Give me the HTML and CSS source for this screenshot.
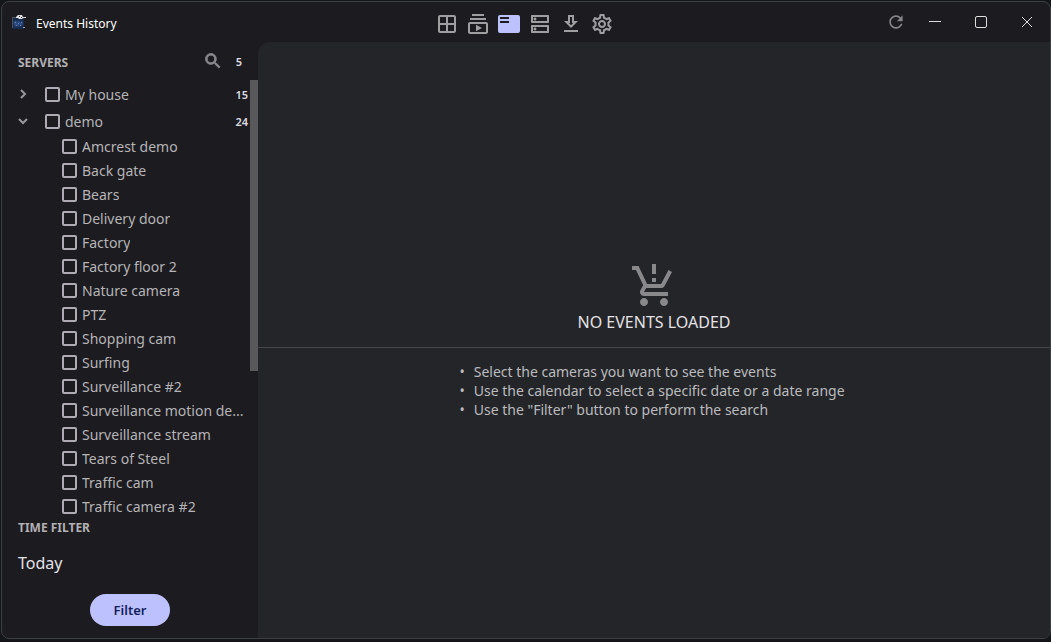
FILE: index.html
```html
<!DOCTYPE html>
<html lang="en">
<head>
<meta charset="utf-8">
<title>Events History</title>
<link rel="stylesheet" href="styles.css">
</head>
<body>
<div class="window">
  <header class="titlebar">
    <div class="brand">
      <svg class="logo" viewBox="0 0 16 16" aria-hidden="true">
        <path d="M1 4h12v11H1z" fill="#182c50"/>
        <path d="M1 3h4v1H2v10H1z" fill="#4b5058"/>
        <path d="M2 8l3-2 1 2 2-2 1 2 2-1 1 2-1 3-2-1-1 2-2-1-2 1-1-2z" fill="#29497f"/>
        <path d="M4 8h1v1H4zM7 9h1v1H7zM10 8h1v1h-1zM5 11h1v1H5zM9 11h1v1H9z" fill="#7185a8"/>
        <path d="M5 3l2-2h4l1 2h3v1h-3l-1 1H8L7 4 5 4z" fill="#dedee0"/>
        <path d="M8 2h1v1H8zM10 3h1v1h-1z" fill="#33343a"/>
        <path d="M12 13h2v1h-2z" fill="#9a9ca2"/>
      </svg>
      <h1 class="title">Events History</h1>
    </div>
    <nav class="tabs" aria-label="Views">
      <button class="tab" aria-label="Screens"><svg viewBox="0 0 24 24"><path d="M19 3H5c-1.100 0-2 .9-2 2v14c0 1.100.9 2 2 2h14c1.100 0 2-.9 2-2V5c0-1.100-.9-2-2-2zm0 8h-6V5h6v6zm-8-6v6H5V5h6zm-6 8h6v6H5v-6zm8 6v-6h6v6h-6z"/></svg></button>
      <button class="tab" aria-label="Timeline"><svg viewBox="0 0 24 24"><path d="M4 6h16v2H4zM6 2h12v2H6zM20 10H4c-1.100 0-2 .9-2 2v8c0 1.100.9 2 2 2h16c1.100 0 2-.9 2-2v-8c0-1.100-.9-2-2-2zm0 10H4v-8h16v8zM10 12.730v6.540L16 16z"/></svg></button>
      <button class="tab tab-active" aria-label="Events"><svg viewBox="0 0 24 24"><path d="M21 3H3c-1.100 0-2 .9-2 2v14c0 1.100.9 2 2 2h18c1.100 0 2-.9 2-2V5c0-1.100-.9-2-2-2zm-9 8H3V9h9v2zm0-4H3V5h9v2z"/></svg></button>
      <button class="tab" aria-label="Servers"><svg viewBox="0 0 24 24"><path d="M19 15v4H5v-4h14m1-2H4c-.55 0-1 .45-1 1v6c0 .55.45 1 1 1h16c.55 0 1-.45 1-1v-6c0-.55-.45-1-1-1zM7 18.500c-.82 0-1.500-.67-1.500-1.500s.68-1.500 1.500-1.500 1.500.67 1.500 1.500-.67 1.500-1.500 1.500zM19 5v4H5V5h14m1-2H4c-.55 0-1 .45-1 1v6c0 .55.45 1 1 1h16c.55 0 1-.45 1-1V4c0-.55-.45-1-1-1zM7 8.500c-.82 0-1.500-.67-1.500-1.500S6.180 5.500 7 5.500s1.500.68 1.500 1.500S7.830 8.500 7 8.500z"/></svg></button>
      <button class="tab" aria-label="Downloads"><svg viewBox="0 0 24 24"><path d="M19 9h-4V3H9v6H5l7 7 7-7zm-8 2V5h2v6h1.170L12 13.170 9.830 11H11zm-6 7h14v2H5z"/></svg></button>
      <button class="tab" aria-label="Settings"><svg viewBox="0 0 24 24"><path d="M19.430 12.980c.04-.32.07-.64.07-.98s-.03-.66-.07-.98l2.110-1.650c.19-.15.24-.42.12-.64l-2-3.460c-.09-.16-.26-.25-.44-.25-.06 0-.12.01-.17.03l-2.490 1c-.52-.4-1.080-.73-1.690-.98l-.38-2.650C14.460 2.180 14.250 2 14 2h-4c-.25 0-.46.18-.49.42l-.38 2.650c-.61.25-1.170.59-1.690.98l-2.490-1c-.06-.02-.12-.03-.18-.03-.17 0-.34.09-.43.25l-2 3.460c-.13.22-.07.49.12.64l2.110 1.650c-.04.32-.07.65-.07.98s.03.66.07.98l-2.110 1.650c-.19.15-.24.42-.12.64l2 3.460c.09.16.26.25.44.25.06 0 .12-.01.17-.03l2.490-1c.52.4 1.080.73 1.690.98l.38 2.650c.03.24.24.42.49.42h4c.25 0 .46-.18.49-.42l.38-2.650c.61-.25 1.170-.59 1.690-.98l2.490 1c.06.02.12.03.18.03.17 0 .34-.09.43-.25l2-3.460c.12-.22.07-.49-.12-.64l-2.110-1.650zm-1.980-1.710c.04.31.05.52.05.73s-.02.43-.05.73l-.14 1.130.89.7 1.080.84-.7 1.210-1.270-.51-1.040-.42-.9.68c-.43.32-.84.56-1.250.73l-1.060.43-.16 1.130-.2 1.350h-1.400l-.19-1.350-.16-1.130-1.060-.43c-.43-.18-.83-.41-1.230-.71l-.91-.7-1.060.43-1.270.51-.7-1.210 1.080-.84.89-.7-.14-1.130c-.03-.31-.05-.54-.05-.74s.02-.43.05-.73l.14-1.130-.89-.7-1.080-.84.7-1.210 1.270.51 1.040.42.9-.68c.43-.32.84-.56 1.250-.73l1.060-.43.16-1.130.2-1.350h1.390l.19 1.350.16 1.130 1.060.43c.43.18.83.41 1.230.71l.91.7 1.060-.43 1.270-.51.7 1.210-1.070.85-.89.7.14 1.130zM12 8c-2.210 0-4 1.790-4 4s1.790 4 4 4 4-1.790 4-4-1.790-4-4-4zm0 6c-1.100 0-2-.9-2-2s.9-2 2-2 2 .9 2 2-.9 2-2 2z"/></svg></button>
    </nav>
    <div class="controls">
      <button class="refresh" aria-label="Refresh"><svg viewBox="0 0 24 24"><path d="M17.650 6.350C16.200 4.900 14.210 4 12 4c-4.420 0-7.990 3.580-7.990 8s3.570 8 7.990 8c3.730 0 6.840-2.550 7.730-6h-2.080c-.82 2.330-3.040 4-5.650 4-3.310 0-6-2.690-6-6s2.690-6 6-6c1.660 0 3.140.69 4.220 1.780L13 11h7V4l-2.350 2.350z"/></svg></button>
      <button class="control" aria-label="Minimize"><svg viewBox="0 0 12 12"><path d="M0 5.500h12"/></svg></button>
      <button class="control" aria-label="Maximize"><svg viewBox="0 0 12 12"><rect x=".5" y=".5" width="11" height="11" rx="1.500"/></svg></button>
      <button class="control" aria-label="Close"><svg viewBox="0 0 12 12"><path d="M1 1l10 10M11 1L1 11"/></svg></button>
    </div>
  </header>
  <div class="body">
    <aside class="sidebar">
      <div class="servers-head">
        <h2 class="label">SERVERS</h2>
        <button class="search" aria-label="Search"><svg viewBox="0 0 24 24"><path d="M15.500 14h-.79l-.28-.27C15.410 12.590 16 11.110 16 9.500 16 5.910 13.090 3 9.500 3S3 5.910 3 9.500 5.910 16 9.500 16c1.610 0 3.090-.59 4.230-1.570l.27.28v.79l5 4.990L20.490 19l-4.990-5zm-6 0C7.010 14 5 11.990 5 9.500S7.010 5 9.500 5 14 7.010 14 9.500 11.990 14 9.500 14z"/></svg></button>
        <span class="count">5</span>
      </div>
      <div class="list-area">
        <div class="tree">
          <div class="server server-first">
            <button class="expander" aria-label="Expand My house"><svg viewBox="0 0 10 10"><path d="M3 1l4 4-4 4"/></svg></button>
            <label class="option"><input type="checkbox" class="check"><span class="name">My house</span></label>
            <span class="count">15</span>
          </div>
          <div class="server">
            <button class="expander" aria-label="Collapse demo"><svg viewBox="0 0 10 10"><path d="M1 3l4 4 4-4"/></svg></button>
            <label class="option"><input type="checkbox" class="check"><span class="name">demo</span></label>
            <span class="count">24</span>
          </div>
          <div class="cameras">
            <label class="option camera"><input type="checkbox" class="check"><span class="name">Amcrest demo</span></label>
            <label class="option camera"><input type="checkbox" class="check"><span class="name">Back gate</span></label>
            <label class="option camera"><input type="checkbox" class="check"><span class="name">Bears</span></label>
            <label class="option camera"><input type="checkbox" class="check"><span class="name">Delivery door</span></label>
            <label class="option camera"><input type="checkbox" class="check"><span class="name">Factory</span></label>
            <label class="option camera"><input type="checkbox" class="check"><span class="name">Factory floor 2</span></label>
            <label class="option camera"><input type="checkbox" class="check"><span class="name">Nature camera</span></label>
            <label class="option camera"><input type="checkbox" class="check"><span class="name">PTZ</span></label>
            <label class="option camera"><input type="checkbox" class="check"><span class="name">Shopping cam</span></label>
            <label class="option camera"><input type="checkbox" class="check"><span class="name">Surfing</span></label>
            <label class="option camera"><input type="checkbox" class="check"><span class="name">Surveillance #2</span></label>
            <label class="option camera"><input type="checkbox" class="check"><span class="name">Surveillance motion de...</span></label>
            <label class="option camera"><input type="checkbox" class="check"><span class="name">Surveillance stream</span></label>
            <label class="option camera"><input type="checkbox" class="check"><span class="name">Tears of Steel</span></label>
            <label class="option camera"><input type="checkbox" class="check"><span class="name">Traffic cam</span></label>
            <label class="option camera"><input type="checkbox" class="check"><span class="name">Traffic camera #2</span></label>
          </div>
        </div>
        <div class="scrollbar"><div class="thumb"></div></div>
      </div>
      <div class="time">
        <h2 class="label">TIME FILTER</h2>
        <button class="date">Today</button>
        <button class="filter">Filter</button>
      </div>
    </aside>
    <main class="content">
      <section class="empty">
        <svg class="cart" viewBox="0 0 24 24" aria-hidden="true"><path d="M13 10h-2V8h2v2zm0-4h-2V1h2v5zM7 18c-1.100 0-1.990.9-1.990 2S5.900 22 7 22s2-.9 2-2-.9-2-2-2zm10 0c-1.100 0-1.990.9-1.990 2s.89 2 1.990 2 2-.9 2-2-.9-2-2-2zm-8.900-5h7.450c.75 0 1.410-.41 1.750-1.030L21 4.960 19.250 4l-3.700 7H8.530L4.270 2H1v2h2l3.600 7.590-1.350 2.440C4.520 15.370 5.480 17 7 17h12v-2H7l1.100-2z"/></svg>
        <p class="message">NO EVENTS LOADED</p>
      </section>
      <section class="help">
        <ul class="tips">
          <li>Select the cameras you want to see the events</li>
          <li>Use the calendar to select a specific date or a date range</li>
          <li>Use the "Filter" button to perform the search</li>
        </ul>
      </section>
    </main>
  </div>
</div>
</body>
</html>
```
FILE: styles.css
```css
* {
  box-sizing: border-box;
}

body {
  margin: 0;
  height: 100vh;
  padding: 1px 0 3px 1px;
  background: #131518;
  color: #bbbbbe;
  font-family: "Noto Sans", "Open Sans", sans-serif;
  font-size: 14px;
}

h1, h2, p, ul {
  margin: 0;
}

button {
  padding: 0;
  border: 0;
  background: none;
  color: inherit;
  font: inherit;
}

svg {
  display: block;
}

.window {
  display: flex;
  flex-direction: column;
  height: 100%;
  overflow: hidden;
  border: 1px solid #3d3e42;
  border-radius: 8px;
  background: #1c1b1f;
}

.titlebar {
  display: grid;
  grid-template-columns: 1fr auto 1fr;
  align-items: center;
  flex: none;
  height: 40px;
}

.brand {
  display: flex;
  align-items: center;
  gap: 9px;
  padding-left: 9px;
}

.logo {
  width: 16px;
  height: 16px;
}

.title {
  color: #fff;
  font-size: 12px;
  font-weight: 400;
  line-height: 20px;
  padding-top: 3px;
}

.tabs {
  display: flex;
  gap: 7px;
  padding: 3px 4px 0 0;
}

.tab {
  color: #9f9ea1;
}

.tab svg {
  width: 24px;
  height: 24px;
  fill: currentColor;
}

.tab-active {
  color: #bdc2ff;
}

.controls {
  display: flex;
  align-items: center;
  justify-content: flex-end;
}

.refresh {
  margin-right: 6px;
  color: #858488;
}

.refresh svg {
  width: 20px;
  height: 20px;
  fill: currentColor;
}

.control {
  display: grid;
  place-items: center;
  width: 46px;
  height: 32px;
}

.control svg {
  width: 12px;
  height: 12px;
  fill: none;
  stroke: #dededf;
}

.body {
  display: flex;
  flex: 1;
  min-height: 0;
}

.sidebar {
  display: flex;
  flex-direction: column;
  flex: none;
  width: 256px;
}

.servers-head {
  display: flex;
  align-items: center;
  height: 38px;
  padding: 0 16px;
}

.label {
  color: #b2b1b4;
  font-size: 12px;
  font-weight: 700;
  line-height: 20px;
}

.servers-head .label {
  padding-top: 3px;
}

.search {
  margin-left: auto;
  margin-right: 13px;
  color: #89888c;
}

.search svg {
  width: 20px;
  height: 20px;
  fill: currentColor;
  stroke: currentColor;
}

.count {
  color: #dddce0;
  font-size: 11px;
  font-weight: 600;
}

.list-area {
  display: flex;
  flex: 1;
  min-height: 0;
}

.tree {
  flex: 1;
  min-width: 0;
  overflow: hidden;
}

.server {
  display: flex;
  align-items: center;
  height: 26px;
  padding: 0 2px 0 16px;
}

.server-first {
  height: 28px;
}

.expander {
  margin-right: 17px;
}

.expander svg {
  width: 10px;
  height: 10px;
  fill: none;
  stroke: #99989c;
  stroke-width: 2;
}

.option {
  display: flex;
  align-items: center;
  gap: 5px;
  flex: 1;
  min-width: 0;
}

.camera {
  height: 24px;
}

.cameras {
  padding-left: 60px;
}

.check {
  appearance: none;
  flex: none;
  width: 15px;
  height: 15px;
  margin: 0;
  border: 2px solid #aeabb4;
  border-radius: 2px;
}

.name {
  overflow: hidden;
  padding-top: 2px;
  color: #b5b4b7;
  line-height: 20px;
  white-space: nowrap;
}

.scrollbar {
  flex: none;
  width: 8px;
}

.thumb {
  height: 66.500%;
  background: #59585b;
}

.time {
  display: flex;
  flex-direction: column;
  align-items: flex-start;
  flex: none;
  padding: 0 16px 12px;
}

.date {
  margin: 13px 0 19px;
  color: #e4e2e6;
  font-size: 16px;
  line-height: 24px;
}

.filter {
  align-self: center;
  padding: 0 24px;
  border-radius: 16px;
  background: #bdc2ff;
  color: #131e60;
  font-size: 13px;
  font-weight: 600;
  line-height: 32px;
}

.content {
  display: grid;
  grid-template-rows: 306px 1fr;
  flex: 1;
  min-width: 0;
  border-top-left-radius: 12px;
  background: #242529;
}

.empty {
  display: flex;
  flex-direction: column;
  align-items: center;
  justify-content: flex-end;
  padding-bottom: 13px;
  border-bottom: 1px solid #47474b;
}

.cart {
  width: 48px;
  height: 48px;
  fill: #89898b;
}

.message {
  color: #e4e2e6;
  font-size: 16px;
  line-height: 24px;
}

.help {
  display: flex;
  justify-content: center;
  align-items: flex-start;
  padding: 14px 4px 0 0;
}

.tips {
  padding: 0;
  list-style: none;
  line-height: 19px;
}

.tips li {
  display: flex;
  gap: 9px;
}

.tips li::before {
  content: "•";
}
```
